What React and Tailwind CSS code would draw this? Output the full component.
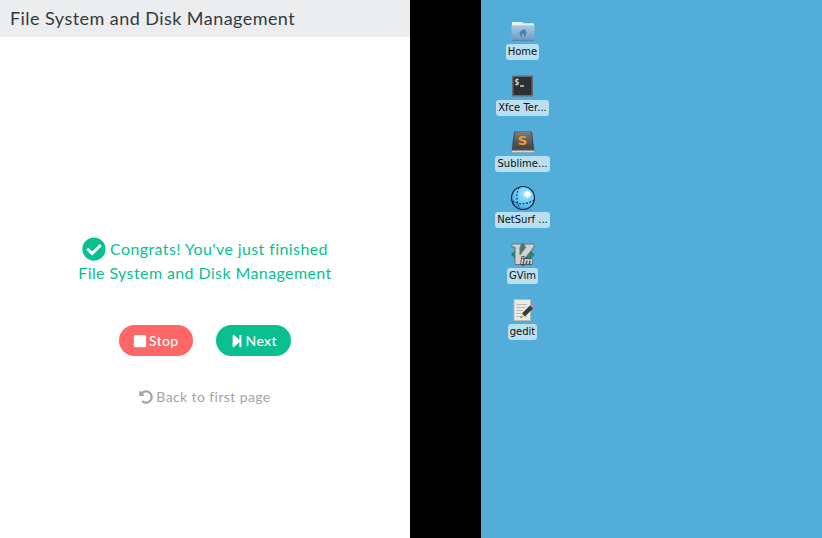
import { FaCheckCircle, FaStop, FaStepForward, FaUndoAlt } from "react-icons/fa";

function HomeIcon() {
  return (
    <svg width="24" height="24" viewBox="0 0 24 24" aria-hidden="true">
      <defs>
        <linearGradient id="folder" x1="0" y1="0" x2="0" y2="1">
          <stop offset="0" stopColor="#a9cbe5" />
          <stop offset="1" stopColor="#6b9bc4" />
        </linearGradient>
      </defs>
      <path d="M1 10V5Q1 4 2 4H10.5Q11.500 4 12 5.200H22Q23 5.200 23 6.200V10Z" fill="#eef3f6" />
      <rect x="0.500" y="7.300" width="23" height="15.200" rx="1" fill="url(#folder)" />
      <path d="M1 22.300H23" stroke="#4f7fa8" />
      <path d="M12 11L7.800 15.200H9.200V18.500H11V16H13V18.500H14.800V15.200H16.200L14.800 13.800V11.500H13.600V12.600Z" fill="#4d80ae" />
    </svg>
  );
}

function TerminalIcon() {
  return (
    <svg width="24" height="24" viewBox="0 0 24 24" aria-hidden="true">
      <rect x="1" y="1.500" width="21" height="21" rx="1" fill="#65696b" />
      <rect x="2.500" y="3" width="18" height="18" fill="#2b3032" />
      <text x="3.500" y="10.500" fontSize="8" fontWeight="bold" fontFamily="DejaVu Sans Mono, monospace" fill="#d8dada">$</text>
      <path d="M9 12H13" stroke="#e8eaea" strokeWidth="1.300" />
    </svg>
  );
}

function SublimeIcon() {
  return (
    <svg width="24" height="24" viewBox="0 0 24 24" aria-hidden="true">
      <defs>
        <linearGradient id="keycap" x1="0" y1="0" x2="0" y2="1">
          <stop offset="0" stopColor="#7d7d7d" />
          <stop offset="1" stopColor="#444445" />
        </linearGradient>
      </defs>
      <path d="M3 1.500H21L23.300 19.500V21.500Q23.300 22.500 22.300 22.500H1.700Q0.700 22.500 0.700 21.500V19.500Z" fill="#4c4c4c" />
      <path d="M0.700 20.500H23.300V21.500Q23.300 22.500 22.300 22.500H1.700Q0.700 22.500 0.700 21.500Z" fill="#d4d7d8" />
      <path d="M4 2H20L21.300 16.500Q21.300 18 20 18H4Q2.700 18 2.700 16.500Z" fill="url(#keycap)" />
      <text x="11.500" y="15" textAnchor="middle" fontSize="13" fontWeight="bold" fontFamily="DejaVu Sans, sans-serif" fill="#f79a2c">S</text>
    </svg>
  );
}

function NetSurfIcon() {
  return (
    <svg width="26" height="26" viewBox="0 0 26 26" aria-hidden="true">
      <defs>
        <radialGradient id="globe" cx="0.6" cy="0.35" r="0.75">
          <stop offset="0" stopColor="#a4e4ff" />
          <stop offset="0.6" stopColor="#62c7f8" />
          <stop offset="1" stopColor="#1c86dc" />
        </radialGradient>
      </defs>
      <circle cx="13" cy="13" r="11.500" fill="url(#globe)" stroke="#0b1c2b" strokeWidth="1.100" />
      <path d="M9 2.500Q4.500 12 9.500 23M2.500 16Q13 22 24 15" fill="none" stroke="#0b2c48" strokeWidth="1.100" strokeDasharray="2 1.500" />
      <path d="M17.500 5L18.500 7L20.500 6.300L20 8.300L22 9.300L20 10.300L20.500 12.300L18.500 11.500L17.500 13.500L16.500 11.500L14.500 12.300L15 10.300L13 9.300L15 8.300L14.500 6.300L16.500 7Z" fill="#fff" />
    </svg>
  );
}

function VimIcon() {
  return (
    <svg width="26" height="26" viewBox="0 -1 26 26" aria-hidden="true">
      <path d="M13 1.500L24 12.500L13 24L1.500 12.500Z" fill="#38846a" stroke="#2d6a5c" />
      <path d="M2 2H11V5H10V13L16 5H14.500V2H24V5L10 22.500H5V5H2Z" fill="#d0d3d4" stroke="#69757a" strokeWidth="1" />
      <text x="10.500" y="21.500" fontSize="9" fontWeight="bold" fontStyle="italic" fontFamily="DejaVu Sans, sans-serif" fill="#d6d9da" stroke="#3c4648" strokeWidth="1.500" paintOrder="stroke">im</text>
    </svg>
  );
}

function GeditIcon() {
  return (
    <svg width="24" height="24" viewBox="0 0 24 24" aria-hidden="true">
      <rect x="3" y="1.500" width="16.500" height="21" fill="#e9eae9" stroke="#b5babb" />
      <path d="M5.500 6.500H16M5.500 9.500H15M5.500 12.500H12M5.500 15.500H10M5.500 18.500H16" stroke="#b4b7b8" />
      <path d="M19 7.500L22 10.500L14 18.500L11 15.500Z" fill="#34383a" />
      <path d="M19.500 7.500L20.500 6.500Q23 7 23 9L22 10Z" fill="#d58bb5" stroke="#c07ba6" />
      <path d="M11 15.500L14 18.500L9.500 20Z" fill="#e3ce4e" />
      <path d="M10 18.500L11 19.500L9.500 20Z" fill="#222" />
    </svg>
  );
}

const shortcuts = [
  { label: "Home", Icon: HomeIcon },
  { label: "Xfce Ter...", Icon: TerminalIcon },
  { label: "Sublime...", Icon: SublimeIcon },
  { label: "NetSurf ...", Icon: NetSurfIcon },
  { label: "GVim", Icon: VimIcon },
  { label: "gedit", Icon: GeditIcon },
];

function LessonPanel() {
  return (
    <main className="w-[calc(50%-1px)] shrink-0 bg-white">
      <header className="bg-[#ebedef] px-[10px] py-1">
        <h1 className="text-lg leading-[29px] tracking-wide text-[#343a40]">File System and Disk Management</h1>
      </header>
      <section className="flex flex-col items-center pt-[200px] text-center tracking-wide">
        <p className="text-base leading-6 text-[#0abf8f]">
          <FaCheckCircle className="-my-[3px] mr-1 inline-block size-6 align-text-bottom" aria-hidden="true" />
          Congrats! You've just finished
          <br />
          File System and Disk Management
        </p>
        <div className="mt-10 flex gap-[23px]">
          <button type="button" className="flex h-[31px] items-center gap-[2px] rounded-full bg-[#ff6666] px-[14px] text-sm font-medium tracking-wide text-white">
            <FaStop className="size-[14px]" aria-hidden="true" />
            Stop
          </button>
          <button type="button" className="flex h-[31px] items-center gap-[2px] rounded-full bg-[#0abf8f] px-[14px] text-sm font-medium tracking-wide text-white">
            <FaStepForward className="size-[14px]" aria-hidden="true" />
            Next
          </button>
        </div>
        <a href="#first" className="mt-[30px] flex items-center gap-[3px] text-sm leading-[22px] text-[#a3a3a3]">
          <FaUndoAlt className="size-[14px]" aria-hidden="true" />
          Back to first page
        </a>
      </section>
    </main>
  );
}

function Desktop() {
  return (
    <section aria-label="Desktop" className="grow bg-black pl-[71px]">
      <div className="h-full bg-[#52aed9] px-[14px] pt-[17px] font-['DejaVu_Sans',sans-serif]">
        <ul className="flex w-[55px] flex-col">
          {shortcuts.map(({ label, Icon }) => (
            <li key={label} className="flex h-[56px] flex-col items-center">
              <span className="mb-px flex h-[26px] items-center justify-center">
                <Icon />
              </span>
              <span className="rounded-[3px] bg-[#b9dff0] px-[2px] text-[10px] leading-4 whitespace-nowrap text-[#111]">{label}</span>
            </li>
          ))}
        </ul>
      </div>
    </section>
  );
}

export default function App() {
  return (
    <div className="flex min-h-screen font-['Lato',sans-serif]">
      <LessonPanel />
      <Desktop />
    </div>
  );
}
